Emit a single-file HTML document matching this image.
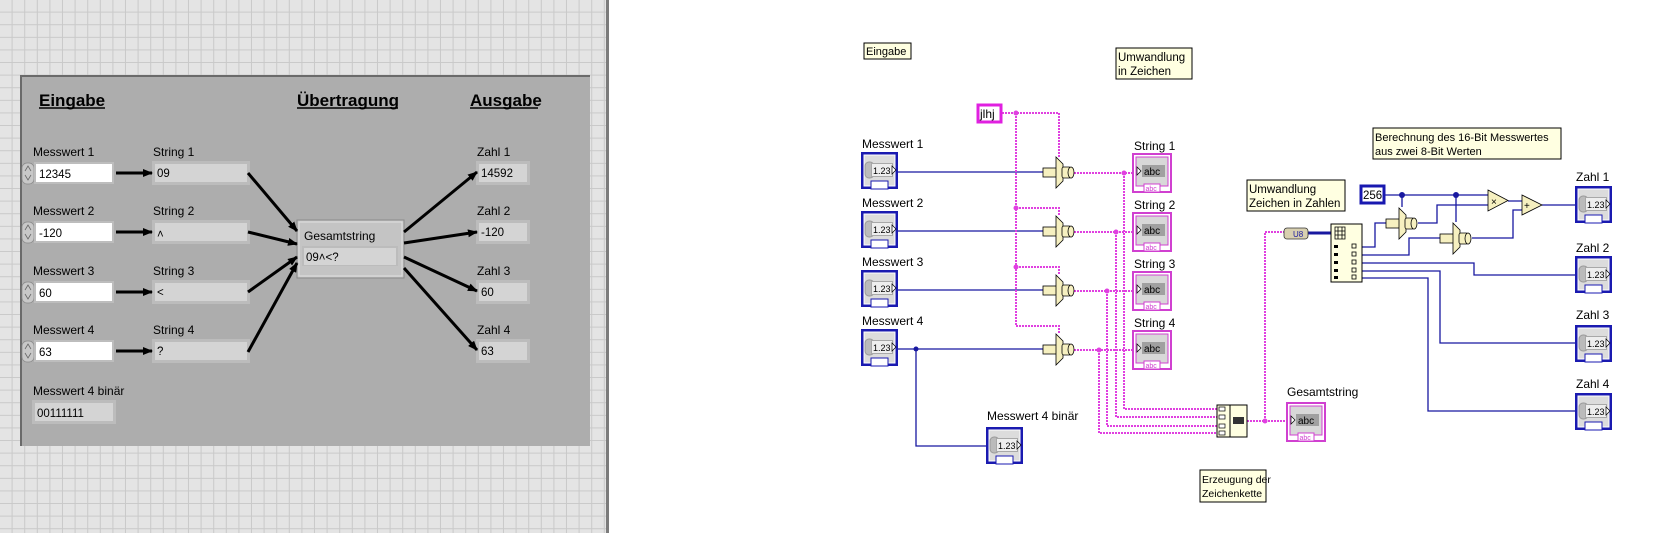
<!DOCTYPE html>
<html><head><meta charset="utf-8"><style>
html,body{margin:0;padding:0;background:#fff;}
svg{display:block;font-family:"Liberation Sans",sans-serif;}
</style></head><body>
<svg width="1659" height="533" viewBox="0 0 1659 533" xmlns="http://www.w3.org/2000/svg">
<defs>
<pattern id="grid" x="0" y="0" width="12.6" height="12.6" patternUnits="userSpaceOnUse">
<rect width="12.6" height="12.6" fill="#e4e4e4"/>
<path d="M12.1 0V12.6M0 12.1H12.6" stroke="#c9c9c9" stroke-width="1"/>
</pattern>
<marker id="ah" markerWidth="10" markerHeight="8" refX="9" refY="4" orient="auto" markerUnits="userSpaceOnUse">
<path d="M0 0L10 4L0 8z" fill="#000"/>
</marker>
<g id="numT">
<rect x="0" y="0" width="37" height="37" fill="#1a1ab0"/>
<rect x="3" y="3" width="31" height="31" fill="#dcdcdc" stroke="#fff" stroke-width="1"/>
<rect x="4" y="10" width="9" height="16" rx="4" fill="#bbb" stroke="#999"/>
<rect x="10" y="11" width="22" height="14" fill="#a8a8a8"/>
<rect x="11" y="12" width="20" height="12" fill="#eee"/>
<text x="12" y="22" font-size="9" fill="#000">1.23</text>
<path d="M31 14l4 4-4 4z" fill="#fff" stroke="#000" stroke-width=".7"/>
<rect x="10" y="29" width="17" height="8" fill="#fff" stroke="#1a1ab0"/>
</g>
<g id="strT">
<rect x="0" y="0" width="38" height="38" fill="#fff" stroke="#d040d0" stroke-width="2"/>
<rect x="3" y="3" width="32" height="29" fill="#d8d8d8" stroke="#d040d0" stroke-width="1"/>
<rect x="9" y="11" width="23" height="12" fill="#a0a0a0"/>
<text x="11" y="21" font-size="10" fill="#000">abc</text>
<path d="M4 13l4 4-4 4z" fill="#fff" stroke="#000" stroke-width=".7"/>
<rect x="11" y="30" width="16" height="8" fill="#fff" stroke="#d040d0"/>
<text x="12.5" y="37" font-size="7" fill="#d040d0">abc</text>
</g>
<g id="tc">
<rect x="0" y="-4" width="14" height="9" fill="#f6f0c0" stroke="#000" stroke-width=".8"/>
<path d="M13 -15L20 -8L20 9L13 16Z" fill="#f6f0c0" stroke="#000" stroke-width=".8"/>
<rect x="19" y="-5" width="9" height="11" rx="2" fill="#f6f0c0" stroke="#000" stroke-width=".8"/>
<ellipse cx="28" cy=".5" rx="3" ry="5.5" fill="#f6f0c0" stroke="#000" stroke-width=".8"/>
</g>
</defs>

<rect x="0" y="0" width="607" height="533" fill="url(#grid)"/>
<rect x="606" y="0" width="3" height="533" fill="#7c7c7c"/>

<rect x="21" y="76" width="569" height="370" fill="#adadad"/>
<path d="M21 446V76H590" stroke="#6a6a6a" stroke-width="2" fill="none"/>
<g font-weight="bold" font-size="17" fill="#000">
<text x="39" y="106">Eingabe</text>
<text x="297" y="106">Übertragung</text>
<text x="470" y="106">Ausgabe</text>
</g>
<line x1="39" y1="108" x2="105" y2="108" stroke="#000" stroke-width="1.5"/>
<line x1="297" y1="108" x2="398" y2="108" stroke="#000" stroke-width="1.5"/>
<line x1="470" y1="108" x2="538" y2="108" stroke="#000" stroke-width="1.5"/>

<g font-size="12" fill="#000">
<text x="33" y="156">Messwert 1</text><text x="153" y="156">String 1</text><text x="477" y="156">Zahl 1</text>
<text x="33" y="215">Messwert 2</text><text x="153" y="215">String 2</text><text x="477" y="215">Zahl 2</text>
<text x="33" y="275">Messwert 3</text><text x="153" y="275">String 3</text><text x="477" y="275">Zahl 3</text>
<text x="33" y="334">Messwert 4</text><text x="153" y="334">String 4</text><text x="477" y="334">Zahl 4</text>
<text x="33" y="395">Messwert 4 binär</text>
</g>
<g>
<g transform="translate(0,162)">
<rect x="22" y="1" width="12" height="21" rx="5" fill="#c8c8c8" stroke="#888" stroke-width=".7"/>
<path d="M25 9l3-5 3 5M25 13l3 5 3-5" stroke="#666" fill="none" stroke-width=".8"/>
<rect x="34" y="0" width="80" height="22" fill="#bdbdbd"/><rect x="36" y="2" width="76" height="18" fill="#fff"/>
<rect x="152" y="-1" width="98" height="24" fill="#bcbcbc"/><rect x="155" y="2" width="92" height="18" fill="#d4d4d4"/>
<rect x="476" y="-1" width="54" height="24" fill="#bcbcbc"/><rect x="479" y="2" width="48" height="18" fill="#d4d4d4"/>
<line x1="116" y1="11" x2="152" y2="11" stroke="#000" stroke-width="3" marker-end="url(#ah)"/>
</g>
<g transform="translate(0,221)">
<rect x="22" y="1" width="12" height="21" rx="5" fill="#c8c8c8" stroke="#888" stroke-width=".7"/>
<path d="M25 9l3-5 3 5M25 13l3 5 3-5" stroke="#666" fill="none" stroke-width=".8"/>
<rect x="34" y="0" width="80" height="22" fill="#bdbdbd"/><rect x="36" y="2" width="76" height="18" fill="#fff"/>
<rect x="152" y="-1" width="98" height="24" fill="#bcbcbc"/><rect x="155" y="2" width="92" height="18" fill="#d4d4d4"/>
<rect x="476" y="-1" width="54" height="24" fill="#bcbcbc"/><rect x="479" y="2" width="48" height="18" fill="#d4d4d4"/>
<line x1="116" y1="11" x2="152" y2="11" stroke="#000" stroke-width="3" marker-end="url(#ah)"/>
</g>
<g transform="translate(0,281)">
<rect x="22" y="1" width="12" height="21" rx="5" fill="#c8c8c8" stroke="#888" stroke-width=".7"/>
<path d="M25 9l3-5 3 5M25 13l3 5 3-5" stroke="#666" fill="none" stroke-width=".8"/>
<rect x="34" y="0" width="80" height="22" fill="#bdbdbd"/><rect x="36" y="2" width="76" height="18" fill="#fff"/>
<rect x="152" y="-1" width="98" height="24" fill="#bcbcbc"/><rect x="155" y="2" width="92" height="18" fill="#d4d4d4"/>
<rect x="476" y="-1" width="54" height="24" fill="#bcbcbc"/><rect x="479" y="2" width="48" height="18" fill="#d4d4d4"/>
<line x1="116" y1="11" x2="152" y2="11" stroke="#000" stroke-width="3" marker-end="url(#ah)"/>
</g>
<g transform="translate(0,340)">
<rect x="22" y="1" width="12" height="21" rx="5" fill="#c8c8c8" stroke="#888" stroke-width=".7"/>
<path d="M25 9l3-5 3 5M25 13l3 5 3-5" stroke="#666" fill="none" stroke-width=".8"/>
<rect x="34" y="0" width="80" height="22" fill="#bdbdbd"/><rect x="36" y="2" width="76" height="18" fill="#fff"/>
<rect x="152" y="-1" width="98" height="24" fill="#bcbcbc"/><rect x="155" y="2" width="92" height="18" fill="#d4d4d4"/>
<rect x="476" y="-1" width="54" height="24" fill="#bcbcbc"/><rect x="479" y="2" width="48" height="18" fill="#d4d4d4"/>
<line x1="116" y1="11" x2="152" y2="11" stroke="#000" stroke-width="3" marker-end="url(#ah)"/>
</g>
<rect x="32" y="400" width="84" height="24" fill="#bcbcbc"/><rect x="35" y="403" width="78" height="18" fill="#d4d4d4"/>
</g>
<g font-size="11.5" fill="#000">
<text x="39" y="178">12345</text><text x="157" y="177">09</text><text x="481" y="177">14592</text>
<text x="39" y="237">-120</text><text x="157" y="238">˄</text><text x="481" y="236">-120</text>
<text x="39" y="297">60</text><text x="157" y="296">&lt;</text><text x="481" y="296">60</text>
<text x="39" y="356">63</text><text x="157" y="355">?</text><text x="481" y="355">63</text>
<text x="37" y="417">00111111</text>
</g>
<rect x="297" y="220" width="107" height="58" fill="#c4c4c4" stroke="#8a8a8a"/>
<rect x="299" y="222" width="103" height="54" fill="none" stroke="#e0e0e0"/>
<text x="304" y="240" font-size="12">Gesamtstring</text>
<rect x="302" y="246" width="96" height="20" fill="#bcbcbc"/><rect x="304" y="248" width="92" height="17" fill="#d4d4d4"/>
<text x="306" y="261" font-size="11.5">09˄&lt;?</text>
<g stroke="#000" stroke-width="3" marker-end="url(#ah)">
<line x1="248" y1="173" x2="297" y2="231"/>
<line x1="248" y1="232" x2="297" y2="244"/>
<line x1="248" y1="292" x2="297" y2="257"/>
<line x1="248" y1="352" x2="297" y2="263"/>
<line x1="404" y1="232" x2="477" y2="172"/>
<line x1="404" y1="243" x2="477" y2="232"/>
<line x1="404" y1="257" x2="477" y2="291"/>
<line x1="404" y1="268" x2="477" y2="350"/>
</g>

<g font-size="11.5" fill="#000">
<rect x="864" y="43" width="47" height="16" fill="#ffffe1" stroke="#000"/>
<text x="866" y="55" font-size="11">Eingabe</text>
<rect x="1116" y="48" width="76" height="31" fill="#ffffe1" stroke="#000"/>
<text x="1118" y="61">Umwandlung</text><text x="1118" y="75">in Zeichen</text>
<rect x="1373" y="128" width="188" height="31" fill="#ffffe1" stroke="#000"/>
<text x="1375" y="141" font-size="11">Berechnung des 16-Bit Messwertes</text><text x="1375" y="155" font-size="11">aus zwei 8-Bit Werten</text>
<rect x="1247" y="180" width="98" height="31" fill="#ffffe1" stroke="#000"/>
<text x="1249" y="193">Umwandlung</text><text x="1249" y="207">Zeichen in Zahlen</text>
<rect x="1200" y="470" width="66" height="32" fill="#ffffe1" stroke="#000"/>
<text x="1202" y="483" font-size="10.5">Erzeugung der</text><text x="1202" y="497" font-size="10.5">Zeichenkette</text>
</g>

<g stroke="#1818a0" stroke-width="1.3" fill="none">
<path d="M898 172H1043M898 231H1043M898 290H1043M898 349H1043"/>
<path d="M916 349V446H986"/>
<path d="M1384 195H1488M1402 195V207M1456 195V222"/>
<path d="M1362 247H1375V223H1386M1362 255H1409V238H1440"/>
<path d="M1418 223H1437V205H1488M1472 238H1513V210H1522"/>
<path d="M1508 201H1522M1542 205H1576"/>
<path d="M1362 263H1474V275H1576M1362 271H1440V343H1576M1362 278H1428V411H1576"/>
</g>
<path d="M1308 233H1331" stroke="#1818a0" stroke-width="3"/>
<g fill="#1818a0"><circle cx="916" cy="349" r="2.5"/><circle cx="1402" cy="195" r="3"/><circle cx="1456" cy="195" r="3"/></g>

<g stroke="#e040e0" stroke-width="2" fill="none" stroke-dasharray="2 1">
<path d="M1002 113H1059V157M1016 113V326"/>
<path d="M1016 208H1059V216M1016 267H1059V275M1016 326H1059V334"/>
<path d="M1074 173H1133M1074 232H1133M1074 291H1133M1074 350H1133"/>
<path d="M1124 173V409H1217M1116 232V417H1217M1107 291V426H1217M1099 350V433H1217"/>
<path d="M1247 421H1287M1265 421V232H1284"/>
</g>
<g fill="#e040e0"><circle cx="1016" cy="113" r="2.5"/><circle cx="1016" cy="208" r="2.5"/><circle cx="1016" cy="267" r="2.5"/>
<circle cx="1124" cy="173" r="2.5"/><circle cx="1116" cy="232" r="2.5"/><circle cx="1107" cy="291" r="2.5"/><circle cx="1099" cy="350" r="2.5"/><circle cx="1265" cy="421" r="2.5"/></g>

<rect x="978" y="105" width="23" height="17" fill="#fff" stroke="#e020e0" stroke-width="3"/>
<text x="980" y="118" font-size="12">jlhj</text>

<g font-size="12">
<text x="862" y="148">Messwert 1</text><text x="862" y="207">Messwert 2</text><text x="862" y="266">Messwert 3</text><text x="862" y="325">Messwert 4</text>
<text x="987" y="420">Messwert 4 binär</text>
<text x="1134" y="150">String 1</text><text x="1134" y="209">String 2</text><text x="1134" y="268">String 3</text><text x="1134" y="327">String 4</text>
<text x="1287" y="396">Gesamtstring</text>
<text x="1576" y="181">Zahl 1</text><text x="1576" y="252">Zahl 2</text><text x="1576" y="319">Zahl 3</text><text x="1576" y="388">Zahl 4</text>
</g>
<use href="#numT" x="861" y="152"/><use href="#numT" x="861" y="211"/><use href="#numT" x="861" y="270"/><use href="#numT" x="861" y="329"/>
<use href="#numT" x="986" y="427"/>
<use href="#numT" x="1575" y="186"/><use href="#numT" x="1575" y="256"/><use href="#numT" x="1575" y="325"/><use href="#numT" x="1575" y="393"/>
<use href="#tc" x="1043" y="172"/><use href="#tc" x="1043" y="231"/><use href="#tc" x="1043" y="290"/><use href="#tc" x="1043" y="349"/>
<use href="#tc" x="1386" y="223"/><use href="#tc" x="1440" y="238"/>
<use href="#strT" x="1133" y="154"/><use href="#strT" x="1133" y="213"/><use href="#strT" x="1133" y="272"/><use href="#strT" x="1133" y="331"/>
<use href="#strT" x="1287" y="403"/>

<rect x="1217" y="405" width="30" height="32" fill="#ffffe1" stroke="#000"/>
<line x1="1230" y1="405" x2="1230" y2="437" stroke="#000"/>
<g fill="#fff" stroke="#000" stroke-width=".7"><rect x="1219" y="407" width="6" height="4"/><rect x="1219" y="415" width="6" height="4"/><rect x="1219" y="424" width="6" height="4"/><rect x="1219" y="431" width="6" height="4"/></g>
<rect x="1233" y="417" width="11" height="7" fill="#333"/>

<rect x="1361" y="186" width="23" height="17" fill="#fff" stroke="#1818b0" stroke-width="3"/>
<text x="1363" y="199" font-size="11.5">256</text>
<rect x="1284" y="228" width="24" height="11" rx="3" fill="#d8d0b0" stroke="#333" stroke-width=".8"/>
<text x="1293" y="237" font-size="8" fill="#1818a0">U8</text>
<rect x="1331" y="224" width="31" height="58" fill="#ffffe1" stroke="#000"/>
<path d="M1335 227h10v12h-10zM1335 231h10M1335 235h10M1338 227v12M1342 227v12" stroke="#000" fill="none" stroke-width=".8"/>
<g fill="#000"><rect x="1334" y="245" width="4" height="3"/><rect x="1334" y="253" width="4" height="3"/><rect x="1334" y="261" width="4" height="3"/><rect x="1334" y="269" width="4" height="3"/><rect x="1334" y="276" width="4" height="3"/></g>
<g fill="none" stroke="#000" stroke-width=".8"><rect x="1352" y="244" width="4" height="4"/><rect x="1352" y="252" width="4" height="4"/><rect x="1352" y="260" width="4" height="4"/><rect x="1352" y="268" width="4" height="4"/><rect x="1352" y="275" width="4" height="4"/></g>
<path d="M1488 190L1508 200.5L1488 211Z" fill="#f6f0c0" stroke="#000" stroke-width=".8"/>
<text x="1491" y="205" font-size="10">×</text>
<path d="M1522 195L1542 205L1522 215Z" fill="#f6f0c0" stroke="#000" stroke-width=".8"/>
<text x="1524" y="209" font-size="10">+</text>
</svg>
</body></html>
